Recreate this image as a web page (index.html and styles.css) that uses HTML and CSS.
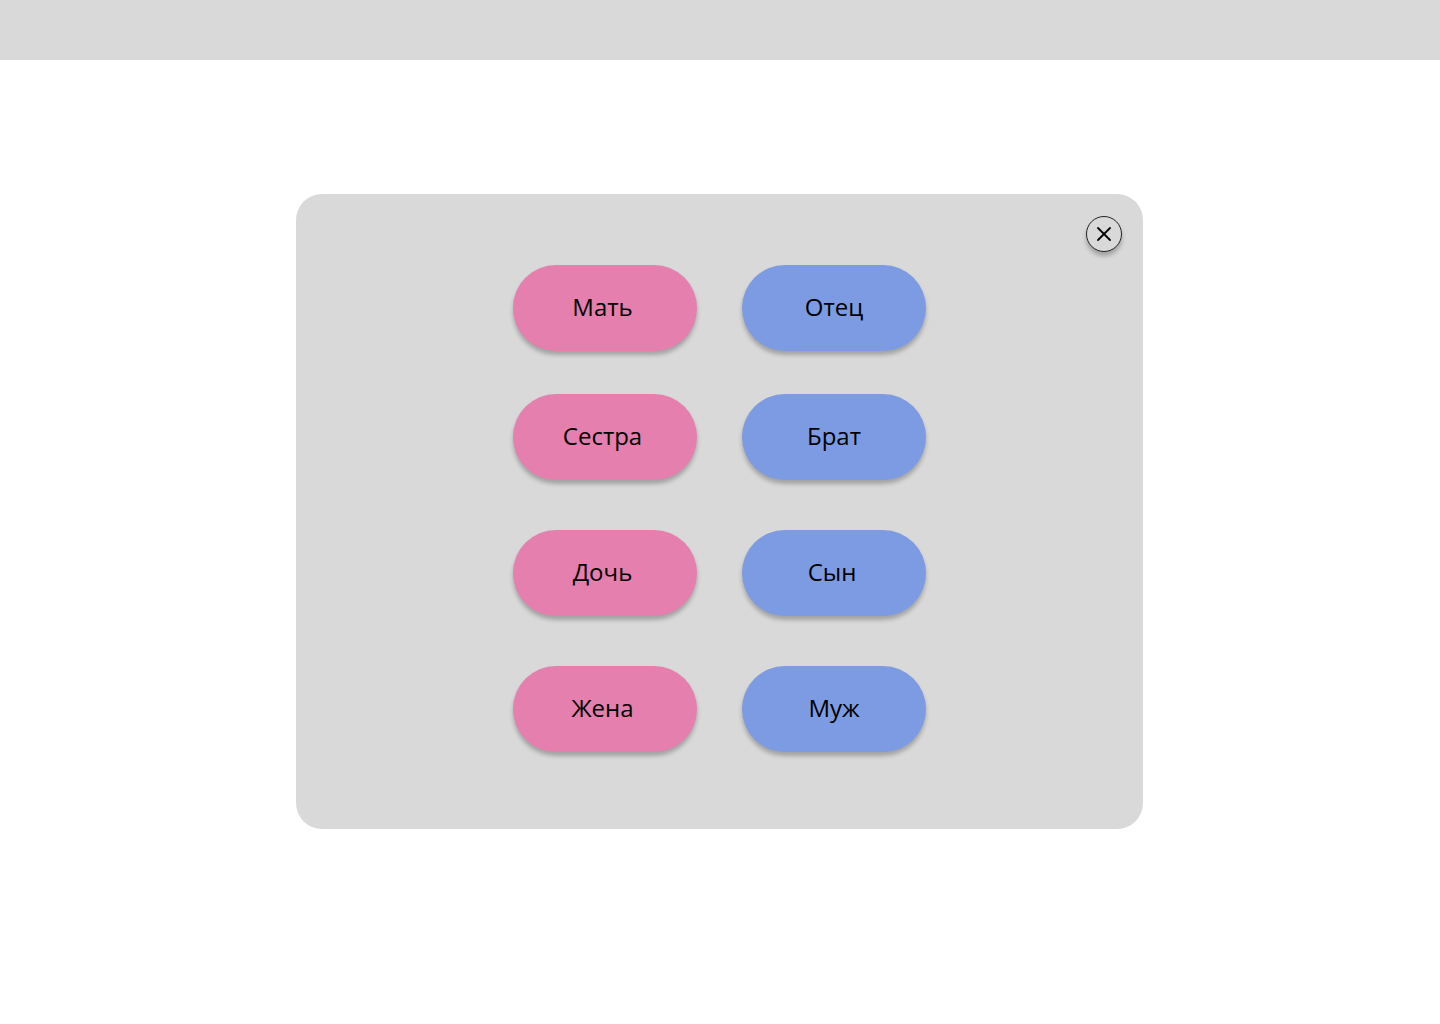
FILE: index.html
```html
<!DOCTYPE html>
<html lang="ru">
<head>
<meta charset="utf-8">
<title>Родственники</title>
<link rel="stylesheet" href="styles.css">
</head>
<body>
<header class="topbar"></header>
<main class="stage">
  <section class="modal">
    <button class="close" aria-label="Закрыть">
      <svg width="16" height="16" viewBox="0 0 16 16"><path d="M2 2L14 14M14 2L2 14" stroke="#000" stroke-width="1.8" stroke-linecap="round"/></svg>
    </button>
    <div class="grid">
      <div class="row row--first">
        <button class="pill pill--pink">Мать</button>
        <button class="pill pill--blue">Отец</button>
      </div>
      <div class="row">
        <button class="pill pill--pink">Сестра</button>
        <button class="pill pill--blue">Брат</button>
      </div>
      <div class="row">
        <button class="pill pill--pink">Дочь</button>
        <button class="pill pill--blue pill--left">Сын</button>
      </div>
      <div class="row">
        <button class="pill pill--pink">Жена</button>
        <button class="pill pill--blue">Муж</button>
      </div>
    </div>
  </section>
</main>
</body>
</html>
```
FILE: styles.css
```css
* { box-sizing: border-box; }
html, body { margin: 0; padding: 0; background: #fff; }
body { font-family: "Open Sans", "Noto Sans", sans-serif; width: 1440px; height: 1024px; overflow: hidden; }
.topbar { height: 60px; background: #d9d9d9; }
.stage { padding-top: 134px; padding-left: 296px; }
.modal {
  position: relative;
  width: 847px;
  height: 635px;
  background: #d9d9d9;
  border-radius: 26px;
  padding: 71px 0 0 217px;
}
.close {
  position: absolute;
  top: 22px;
  right: 21px;
  width: 36px;
  height: 36px;
  border-radius: 50%;
  border: 1px solid #222;
  background: #d9d9d9;
  box-shadow: 0 4px 4px rgba(0,0,0,0.25);
  padding: 0;
  display: flex;
  align-items: center;
  justify-content: center;
  cursor: pointer;
}
.grid { display: flex; flex-direction: column; row-gap: 50px; }
.row { display: flex; column-gap: 45px; }
.row--first { margin-bottom: -7px; }
.pill {
  width: 184px;
  height: 86px;
  border: none;
  border-radius: 43px;
  font-family: "Open Sans", "Noto Sans", sans-serif;
  font-size: 24px;
  color: #000;
  box-shadow: 0 4px 4px rgba(0,0,0,0.25);
  padding: 0 0 4px 0;
  cursor: pointer;
}
.pill--pink { background: #e57fad; padding-right: 5px; }
.pill--blue { background: #7d9be3; }
.pill--left { padding-right: 4px; }
```
